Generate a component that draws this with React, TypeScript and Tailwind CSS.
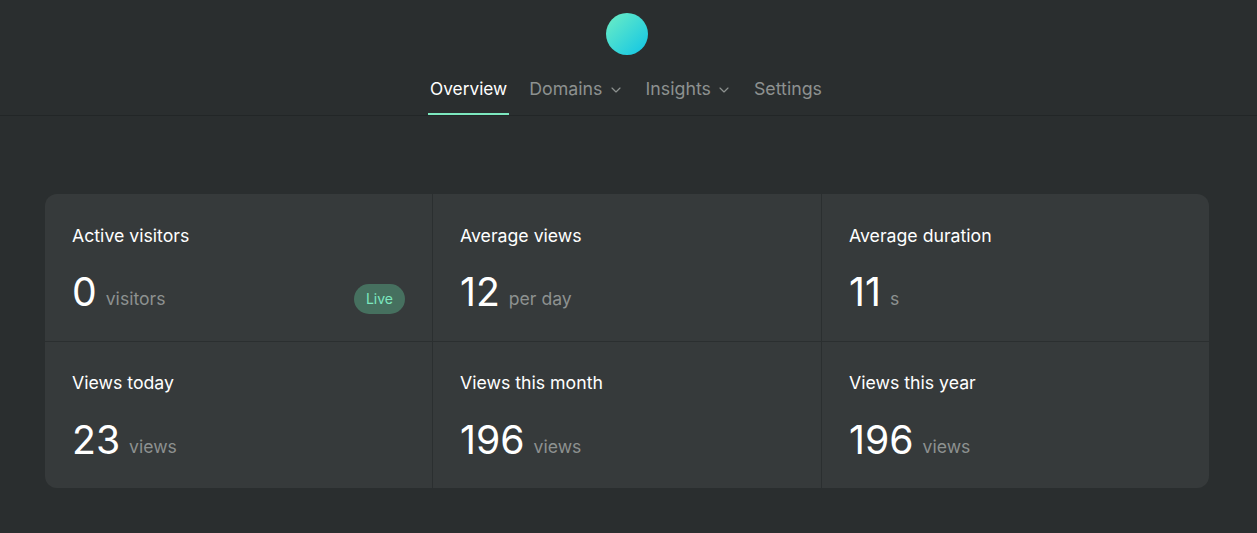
import { ChevronDown } from "lucide-react";

const stats = [
  { title: "Active visitors", value: "0", unit: "visitors", live: true },
  { title: "Average views", value: "12", unit: "per day" },
  { title: "Average duration", value: "11", unit: "s" },
  { title: "Views today", value: "23", unit: "views" },
  { title: "Views this month", value: "196", unit: "views" },
  { title: "Views this year", value: "196", unit: "views" },
];

function NavItem({ label, active, menu }: { label: string; active?: boolean; menu?: boolean }) {
  return (
    <a
      className={`flex h-[47px] items-center gap-[5px] border-b-2 px-[2px] pb-[4px] leading-[26px] ${
        active ? "border-[#7ce8bf] text-[17.3px] text-white" : "border-transparent text-[#8d9190]"
      }`}
    >
      <span>{label}</span>
      {menu && <ChevronDown size={16} strokeWidth={1.75} className="mt-[2px]" />}
    </a>
  );
}

function Stat({ title, value, unit, live, index }: { title: string; value: string; unit: string; live?: boolean; index: number }) {
  const top = index < 3;
  return (
    <div
      className={`flex flex-col border-[#2b2f30] px-[27px] ${index % 3 !== 2 ? "border-r" : ""} ${
        top ? "h-[148px] border-b pt-[29px]" : "h-[146px] pt-[28px]"
      }`}
    >
      <div className="text-[17.7px] leading-[26px] text-white">{title}</div>
      <div className={`flex items-center justify-between ${top ? "mt-[18px]" : "mt-[19px]"}`}>
        <div className="flex items-baseline gap-[9px]">
          <span className="text-[39.2px] leading-[50px] text-white">{value}</span>
          <span className="relative top-[-1px] text-[17.6px] text-[#8d9190]">{unit}</span>
        </div>
        {live && (
          <span className="mt-[14px] rounded-full bg-[#46705f] px-3 py-[5px] text-sm leading-5 text-[#7ce8bf]">Live</span>
        )}
      </div>
    </div>
  );
}

export default function App() {
  return (
    <main className="min-h-screen bg-[#2a2e2f] font-['Inter',sans-serif]">
      <header className="flex flex-col items-center border-b border-[#222627] pr-[3px] pt-[13px]">
        <div className="size-[42px] rounded-full bg-linear-to-br/srgb from-[#6eeec4] to-[#0fc4e6]" />
        <nav className="mr-[2px] mt-[13px] flex gap-[18px] text-[17.8px]">
          <NavItem label="Overview" active />
          <NavItem label="Domains" menu />
          <NavItem label="Insights" menu />
          <NavItem label="Settings" />
        </nav>
      </header>
      <div className="pl-[45px] pr-[48px] pt-[78px]">
        <section className="grid grid-cols-[388px_389px_1fr] overflow-hidden rounded-xl bg-[#363a3b]">
          {stats.map((s, i) => (
            <Stat key={s.title} {...s} index={i} />
          ))}
        </section>
      </div>
    </main>
  );
}
